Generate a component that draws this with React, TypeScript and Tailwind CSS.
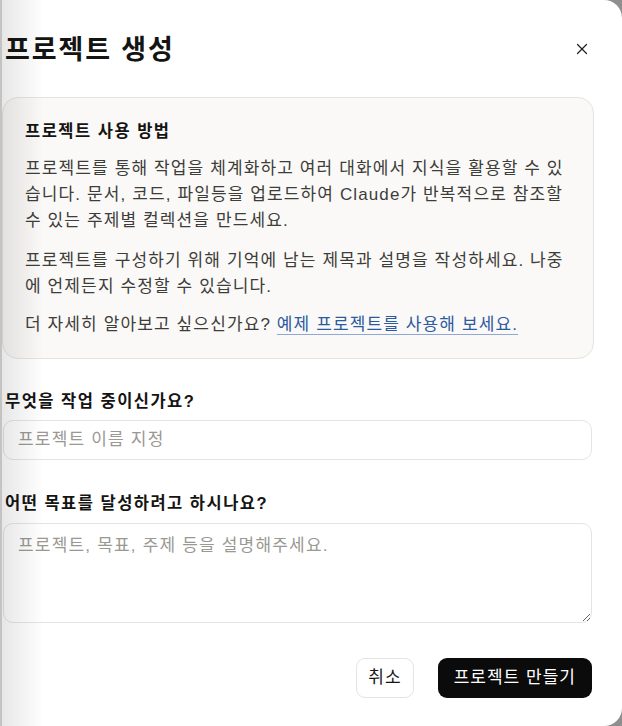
import { X } from 'lucide-react'

const font = { fontFamily: '"Liberation Sans", "Noto Sans CJK KR", sans-serif' }

export default function App() {
  return (
    <div className="h-[726px] w-[622px] overflow-hidden bg-[#8f8f8f] tracking-[0.07em]" style={font}>
      <div className="relative flex h-[726px] w-[622px] flex-col rounded-r-[18px] bg-white pl-[3px] pr-[30px]">
        <div className="pointer-events-none absolute inset-y-0 left-0 w-[44px] bg-gradient-to-r from-black/10 to-transparent" />
        <div className="pointer-events-none absolute inset-y-0 left-0 w-[2px] bg-black/15" />

        <div className="flex items-center justify-between pt-[32px] pl-[2px]">
          <h1 className="text-[27px] font-bold leading-[36px] tracking-[0.07em] text-[#141413]">프로젝트 생성</h1>
          <button className="mb-[3px] mr-[1px] text-[#222]">
            <X size={18} strokeWidth={1.6} />
          </button>
        </div>

        <div className="-mr-[2px] -ml-[1px] mt-[29px] rounded-[16px] border border-[#e6e4df] bg-[#faf9f7] pl-[22px] pr-[16px] pt-[20px] pb-[20px] text-[17px] leading-[26px] text-[#3d3d3a]">
          <h2 className="mb-[12px] text-[16.5px] font-bold tracking-[0.09em] text-[#141413]">프로젝트 사용 방법</h2>
          <p>
            프로젝트를 통해 작업을 체계화하고 여러 대화에서 지식을 활용할 수 있
            <br />
            습니다. 문서, 코드, 파일등을 업로드하여 Claude가 반복적으로 참조할
            <br />
            수 있는 주제별 컬렉션을 만드세요.
          </p>
          <p className="mt-[14px]">
            프로젝트를 구성하기 위해 기억에 남는 제목과 설명을 작성하세요. 나중
            <br />
            에 언제든지 수정할 수 있습니다.
          </p>
          <p className="mt-[12px]">
            더 자세히 알아보고 싶으신가요?{' '}
            <a className="text-[#2c5a9e] underline decoration-[#8fa9d4] underline-offset-[4px]">
              예제 프로젝트를 사용해 보세요.
            </a>
          </p>
        </div>

        <label className="mt-[30px] pl-[2px] text-[16.5px] font-bold leading-[24px] tracking-[0.09em] text-[#141413]">
          무엇을 작업 중이신가요?
        </label>
        <input
          className="mt-[7px] h-[40px] rounded-[10px] border border-[#e6e4df] bg-white px-[14px] text-[17px] tracking-[0.07em] text-[#141413] outline-none placeholder:text-[#9a9893]"
          placeholder="프로젝트 이름 지정"
        />

        <label className="mt-[31px] pl-[2px] text-[16.5px] font-bold leading-[24px] tracking-[0.09em] text-[#141413]">
          어떤 목표를 달성하려고 하시나요?
        </label>
        <textarea
          className="mt-[8px] h-[100px] rounded-[10px] border border-[#e6e4df] bg-white px-[14px] py-[9px] text-[17px] leading-[25px] tracking-[0.07em] text-[#141413] outline-none placeholder:text-[#9a9893]"
          placeholder="프로젝트, 목표, 주제 등을 설명해주세요."
        />

        <div className="mt-[35px] flex justify-end gap-[24px]">
          <button className="h-[40px] rounded-[9px] border border-[#e6e4df] bg-white px-[11px] text-[17px] tracking-[0.06em] text-[#141413]">
            취소
          </button>
          <button className="h-[40px] rounded-[9px] bg-[#0b0b0b] px-[16px] text-[17px] tracking-[0.06em] text-white">
            프로젝트 만들기
          </button>
        </div>
      </div>
    </div>
  )
}
